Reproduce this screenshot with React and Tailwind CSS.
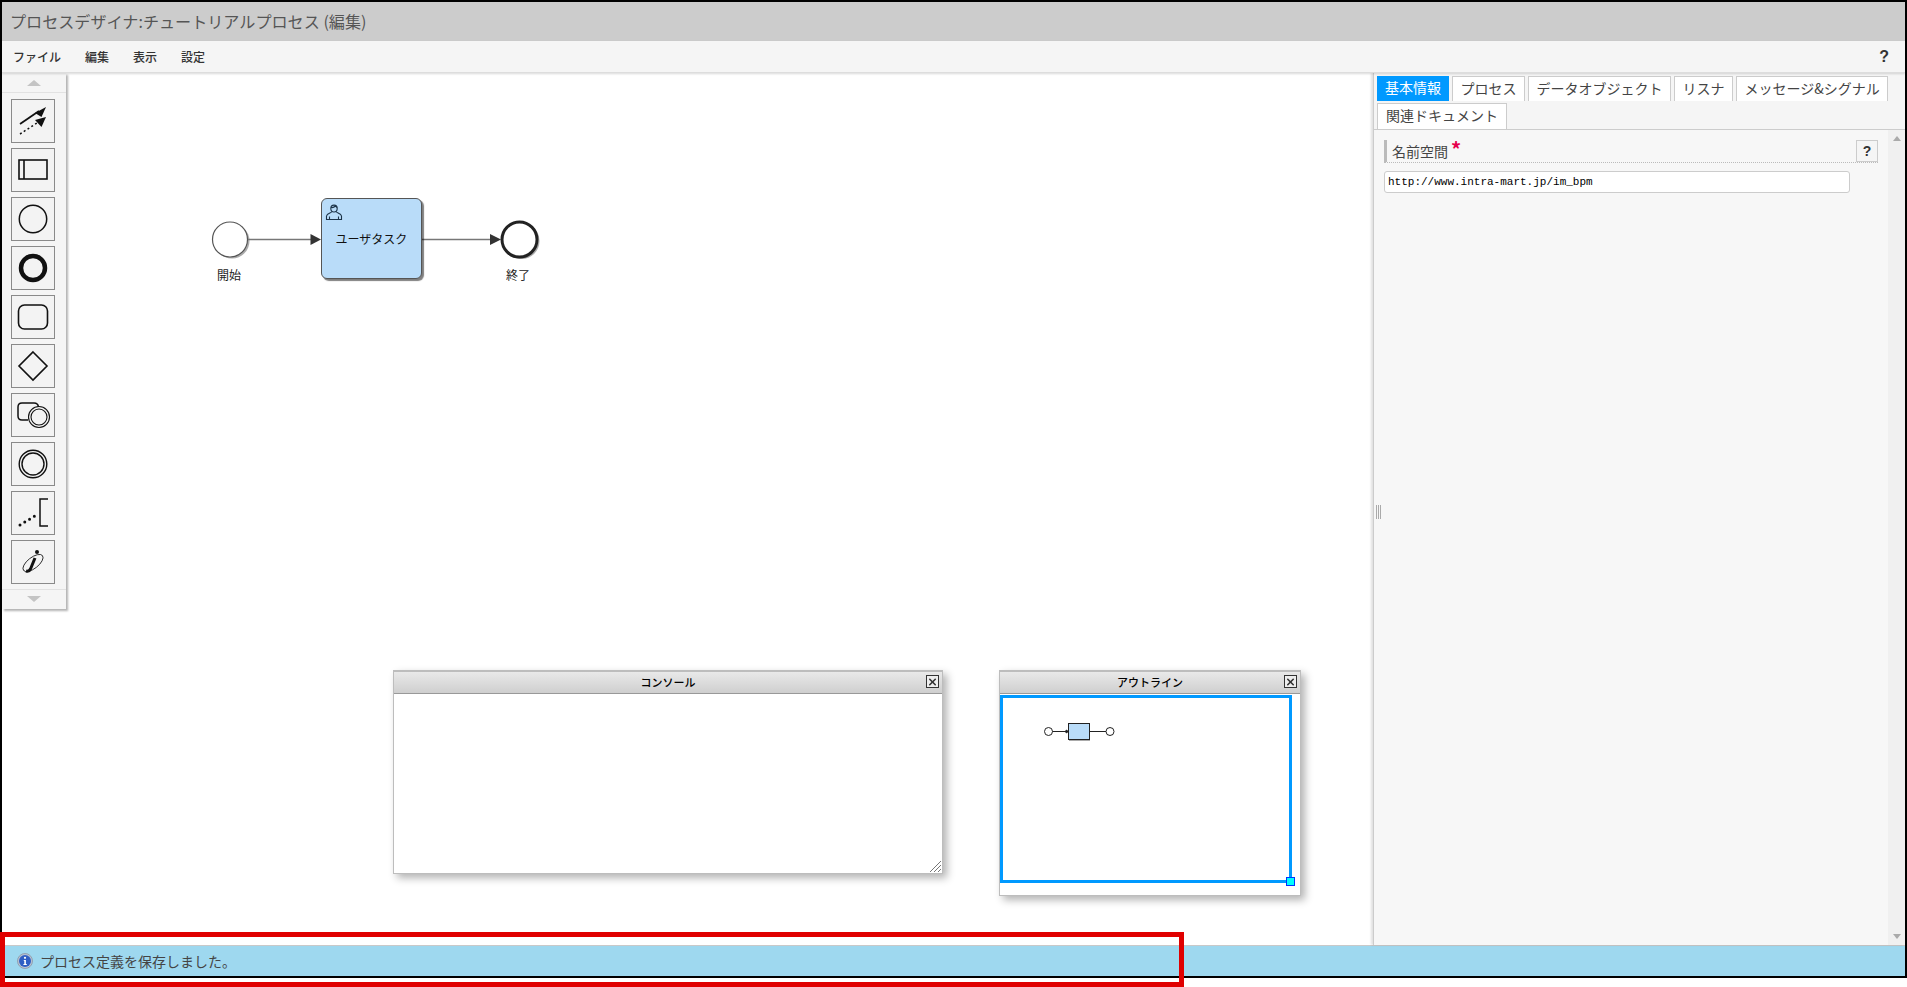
import { X } from 'lucide-react'

const JP = 'font-["Noto_Sans_CJK_JP","Liberation_Sans",sans-serif]'

const TABS = ['基本情報', 'プロセス', 'データオブジェクト', 'リスナ', 'メッセージ&シグナル']

function PaletteIcon({ children }) {
  return (
    <button className="w-[44px] h-[44px] border border-[#8a8a8a] bg-[#f3f3f3] shrink-0 flex items-center justify-center">
      <svg width="42" height="42" viewBox="0 0 42 42" fill="none" stroke="#111" strokeWidth="1.5">
        {children}
      </svg>
    </button>
  )
}

function Palette() {
  return (
    <div className="absolute left-0 top-0 w-[64px] h-[536px] bg-[#f5f5f5] shadow-[2px_2px_2px_rgba(0,0,0,0.3)] flex flex-col items-center">
      <div className="h-[20px] w-full border-b border-[#e2e2e2] flex items-center justify-center">
        <div className="w-0 h-0 border-x-[7px] border-x-transparent border-b-[6px] border-b-[#c4c4c4]" />
      </div>
      <div className="flex flex-col gap-[5px] pt-[6px] pr-[2px]">
        <PaletteIcon>
          <path d="M8 24 L27 11" strokeWidth="1.8" />
          <path d="M34 7 L23 13 L29.5 17 Z" fill="#111" stroke="none" />
          <path d="M8 34 L25 23" strokeDasharray="2 2.5" />
          <path d="M34 17 L23 20 L29.5 27 Z" fill="#111" stroke="none" />
        </PaletteIcon>
        <PaletteIcon>
          <rect x="7" y="11" width="28" height="19" strokeWidth="1.6" />
          <path d="M12 11 V30" strokeWidth="1.6" />
        </PaletteIcon>
        <PaletteIcon>
          <circle cx="21" cy="21" r="13.7" strokeWidth="1.5" />
        </PaletteIcon>
        <PaletteIcon>
          <circle cx="21" cy="21" r="12" strokeWidth="4.5" />
        </PaletteIcon>
        <PaletteIcon>
          <rect x="6.5" y="9" width="29" height="24" rx="6" strokeWidth="1.6" />
        </PaletteIcon>
        <PaletteIcon>
          <path d="M21 7 L35 21 L21 35 L7 21 Z" strokeWidth="1.6" />
        </PaletteIcon>
        <PaletteIcon>
          <path d="M16 26 H10 Q6 26 6 22 V13 Q6 9 10 9 H22 Q26 9 26.5 13" strokeWidth="1.5" />
          <circle cx="27" cy="23" r="10.5" strokeWidth="1.1" />
          <circle cx="27" cy="23" r="8" strokeWidth="1.1" />
        </PaletteIcon>
        <PaletteIcon>
          <circle cx="21" cy="21" r="13.8" strokeWidth="1.4" />
          <circle cx="21" cy="21" r="11" strokeWidth="1.4" />
        </PaletteIcon>
        <PaletteIcon>
          <path d="M36 7 H28 V34 H36" strokeWidth="1.5" />
          <path d="M8 33 L26 22" strokeWidth="3" strokeDasharray="0 5.6" strokeLinecap="round" />
        </PaletteIcon>
        <PaletteIcon>
          <ellipse cx="21" cy="22" rx="12" ry="5.5" transform="rotate(-38 21 22)" strokeWidth="0.8" />
          <path d="M23 17 L18.5 28 Q17 31 14 30" strokeWidth="3" />
          <circle cx="25" cy="11" r="2" fill="#111" stroke="none" />
        </PaletteIcon>
      </div>
      <div className="mt-[5px] h-[19px] w-full border-t border-[#e2e2e2] flex items-center justify-center">
        <div className="w-0 h-0 border-x-[7px] border-x-transparent border-t-[6px] border-t-[#c4c4c4]" />
      </div>
    </div>
  )
}

function UserIcon() {
  return (
    <svg width="18" height="18" viewBox="0 0 18 18" fill="none" stroke="#1c3348" strokeWidth="1.1" className="absolute left-[3px] top-[4px]">
      <path d="M5.8 5.5 C5.8 1 12.2 1 12.2 5.5 C12.2 7.5 11.3 9 9 9 C6.7 9 5.8 7.5 5.8 5.5 Z" />
      <path d="M6 4.5 C8 5 10 3.5 10.5 3 C11 4 11.6 4.3 12.2 4.5" />
      <path d="M6.8 8.5 C6.5 10 2 10 1.5 13 V16.5 H16.5 V13 C16 10 11.5 10 11.2 8.5" />
      <path d="M4.5 13.5 V16.5 M13.5 13.5 V16.5" />
    </svg>
  )
}

function Diagram() {
  return (
    <>
      <svg className="absolute left-[200px] top-[120px]" width="360" height="100" viewBox="0 0 360 100" fill="none">
        <circle cx="30" cy="48" r="17.5" fill="#888" opacity="0.7" />
        <circle cx="28" cy="46.5" r="17.5" fill="#fff" stroke="#555" strokeWidth="1.2" />
        <path d="M46 46.5 H110" stroke="#777" strokeWidth="1.5" />
        <path d="M108.5 41 L119 46.5 L108.5 52 Z" fill="#333" />
        <path d="M220 46.5 H290" stroke="#777" strokeWidth="1.5" />
        <path d="M288 41 L299 46.5 L288 52 Z" fill="#333" />
        <circle cx="319.5" cy="48" r="18" fill="#888" opacity="0.7" />
        <circle cx="317.5" cy="46.5" r="17.5" fill="#fff" stroke="#222" strokeWidth="3" />
      </svg>
      <div className={`absolute left-[319px] top-[125px] w-[101px] h-[81px] rounded-[6px] bg-[#b9dcf9] border border-[#555] shadow-[2px_2px_1px_rgba(0,0,0,0.5)] flex items-center justify-center text-[12px] text-[#111] ${JP}`}>
        <UserIcon />
        <span className="mt-[1px]">ユーザタスク</span>
      </div>
      <div className={`absolute left-[197px] top-[193px] w-[60px] text-center text-[12px] leading-[18px] text-[#222] ${JP}`}>開始</div>
      <div className={`absolute left-[486px] top-[193px] w-[60px] text-center text-[12px] leading-[18px] text-[#222] ${JP}`}>終了</div>
    </>
  )
}

function FloatWindow({ title, className, children }) {
  return (
    <div className={`absolute flex flex-col bg-white border border-[#bdbdbd] border-t-2 shadow-[4px_4px_8px_rgba(0,0,0,0.3)] ${className}`}>
      <div className={`relative h-[22px] shrink-0 flex items-center justify-center bg-gradient-to-b from-[#e9e9e9] to-[#cfcfcf] border-b border-[#999] text-[11px] text-black font-medium ${JP}`}>
        {title}
        <div className="absolute right-[3px] top-[3px] w-[13px] h-[13px] border border-[#333] bg-[#eee] flex items-center justify-center">
          <X size={12} strokeWidth={3.5} color="#333" />
        </div>
      </div>
      <div className="relative flex-1">{children}</div>
    </div>
  )
}

function MiniMap() {
  return (
    <svg className="absolute left-[44px] top-[27px]" width="72" height="22" viewBox="0 0 72 22" fill="none" stroke="#222">
      <circle cx="4.5" cy="10.5" r="4" fill="#fff" />
      <path d="M8.5 10.5 H24" />
      <path d="M22 9 L24.5 10.5 L22 12 Z" fill="#222" />
      <rect x="24.5" y="2.5" width="21" height="16" fill="#b9dcf9" />
      <path d="M25 19.5 H46" stroke="#aaa" />
      <path d="M46 10.5 H62" />
      <circle cx="66" cy="10.5" r="4" fill="#fff" />
    </svg>
  )
}

function PropertyPanel() {
  return (
    <div className={`relative w-[532px] shrink-0 flex flex-col bg-[#f5f5f5] border-l border-[#ccc] shadow-[-2px_0_2px_rgba(0,0,0,0.12)] ${JP}`}>
      <div className="h-[57px] shrink-0 flex flex-wrap content-start gap-x-[3px] gap-y-[2px] pt-[3px] pl-[3px] border-b border-[#ccc] text-[14px] leading-[22px]">
        {TABS.map((t, i) => (
          <div
            key={t}
            className={i === 0
              ? 'h-[25px] px-[8px] bg-[#0099ff] text-white'
              : 'h-[25px] px-[7.5px] bg-white text-[#444] border border-b-0 border-[#ccc]'}
          >
            {t}
          </div>
        ))}
        <div className="h-[26px] px-[8px] bg-white text-[#444] border border-b-0 border-[#ccc]">関連ドキュメント</div>
      </div>
      <div className="flex-1 flex min-h-0">
        <div className="flex-1 bg-[#f7f7f7] pt-[10px] pl-[10px] pr-[10px]">
          <div className="h-[23px] flex items-start justify-between border-l-[3px] border-[#bbb] border-b border-b-[#bbb] border-dotted [border-left-style:solid] text-[14px] text-[#444]">
            <div className="pl-[5px] leading-[22px] flex">
              名前空間
              <span className="text-[#e6004c] text-[20px] leading-[18px] ml-[3px] font-bold">*</span>
            </div>
            <div className="w-[22px] h-[22px] border border-[#ccc] bg-[#f5f5f5] flex items-center justify-center text-[14px] font-bold text-[#333] font-['Liberation_Sans',sans-serif]">?</div>
          </div>
          <div className="mt-[8px] w-[466px] h-[22px] bg-white border border-[#ccc] rounded-[3px] pl-[3px] leading-[20px] text-[11px] text-black font-['Liberation_Mono',monospace]">
            http://www.intra-mart.jp/im_bpm
          </div>
        </div>
        <div className="w-[17px] bg-[#f0f0f0] flex flex-col items-center justify-between py-[6px]">
          <div className="w-0 h-0 border-x-[4px] border-x-transparent border-b-[5px] border-b-[#aaa]" />
          <div className="w-0 h-0 border-x-[4px] border-x-transparent border-t-[5px] border-t-[#aaa]" />
        </div>
      </div>
      <div className="absolute left-[2px] top-[432px] w-[5px] h-[14px] flex justify-between">
        <div className="w-px bg-[#aaa]" />
        <div className="w-px bg-[#aaa]" />
        <div className="w-px bg-[#aaa]" />
      </div>
    </div>
  )
}

export default function App() {
  return (
    <div className="relative w-[1907px] h-[987px] bg-white overflow-hidden">
      <div className="h-[978px] border-2 border-black flex flex-col">
        {/* Title */}
        <div className={`h-[39px] shrink-0 bg-[#cccccc] pl-[8px] flex items-center text-[16.1px] text-[#555] ${JP}`}>
          プロセスデザイナ:チュートリアルプロセス (編集)
        </div>

        {/* Menu */}
        <div className={`relative z-10 h-[32px] shrink-0 bg-[#f5f5f5] border-b border-[#ddd] shadow-[0_1px_2px_rgba(0,0,0,0.15)] flex items-center pl-[11px] pr-[16px] gap-[24px] text-[12px] font-medium text-[#333] ${JP}`}>
          <span>ファイル</span>
          <span>編集</span>
          <span>表示</span>
          <span>設定</span>
          <span className="ml-auto text-[16px] font-bold font-['Liberation_Sans',sans-serif]">?</span>
        </div>

        {/* Main */}
        <div className="flex-1 flex min-h-0">
          <div className="relative flex-1 bg-white">
            <Palette />
            <Diagram />
            <FloatWindow title="コンソール" className="left-[391px] top-[597px] w-[550px] h-[204px]">
              <svg className="absolute right-[1px] bottom-[1px]" width="11" height="11" viewBox="0 0 11 11" stroke="#777" strokeWidth="1">
                <path d="M0 11 L11 0 M4 11 L11 4 M8 11 L11 8" />
              </svg>
            </FloatWindow>
            <FloatWindow title="アウトライン" className="left-[997px] top-[597px] w-[302px] h-[226px]">
              <MiniMap />
              <div className="absolute left-0 top-[1px] w-[292px] h-[188px] border-[3px] border-[#0099ff]">
                <div className="absolute -right-[6px] -bottom-[6px] w-[9px] h-[9px] bg-[#00ffff] border border-[#0033ff]" />
              </div>
            </FloatWindow>
          </div>
          <PropertyPanel />
        </div>

        {/* Status */}
        <div className={`h-[31px] shrink-0 bg-[#9ed8ef] border-t border-[#c9c9c9] flex items-center pl-[15px] gap-[7px] text-[14px] text-[#444] ${JP}`}>
          <svg width="16" height="16" viewBox="0 0 16 16">
            <circle cx="8" cy="8" r="7.5" fill="#b8c4d4" stroke="#8a93a3" strokeWidth="0.8" />
            <circle cx="8" cy="8" r="6" fill="#2f5fc4" />
            <circle cx="8" cy="4.8" r="1.1" fill="#fff" />
            <path d="M6.8 7 H8.9 V11 H9.8 V12 H6.4 V11 H7.3 V8 H6.8 Z" fill="#fff" />
          </svg>
          <span>プロセス定義を保存しました。</span>
        </div>
      </div>

      {/* Annotation */}
      <div className="absolute left-0 top-[932px] w-[1184px] h-[55px] border-[5px] border-[#e00000]" />
    </div>
  )
}
